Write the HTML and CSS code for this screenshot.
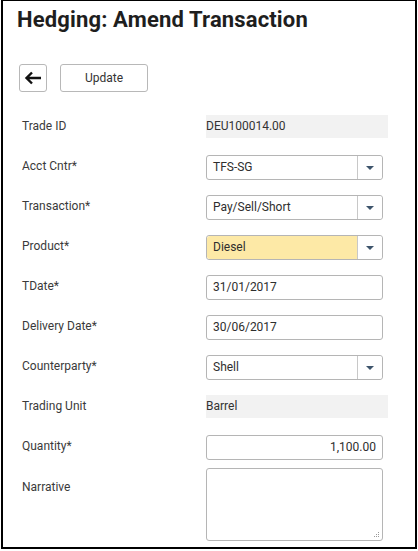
FILE: index.html
```html
<!DOCTYPE html>
<html>
<head>
<meta charset="utf-8">
<link rel="stylesheet" href="styles.css">
</head>
<body>
<div class="frame">
  <h1 class="title">Hedging: Amend Transaction</h1>
  <div class="toolbar">
    <button class="btn btn-back" aria-label="Back">
      <svg width="18" height="14" viewBox="0 0 18 14"><path d="M17 7H2.5M8 1.5L2.5 7L8 12.5" fill="none" stroke="#111" stroke-width="2.4"/></svg>
    </button>
    <button class="btn btn-update">Update</button>
  </div>
  <div class="form">
    <div class="row">
      <div class="label ro-label">Trade ID</div>
      <div class="readonly">DEU100014.00</div>
    </div>
    <div class="row">
      <div class="label">Acct Cntr*</div>
      <div class="select"><span class="value">TFS-SG</span><span class="drop"><i class="caret"></i></span></div>
    </div>
    <div class="row">
      <div class="label">Transaction*</div>
      <div class="select"><span class="value">Pay/Sell/Short</span><span class="drop"><i class="caret"></i></span></div>
    </div>
    <div class="row">
      <div class="label">Product*</div>
      <div class="select select-hl"><span class="value">Diesel</span><span class="drop"><i class="caret"></i></span></div>
    </div>
    <div class="row">
      <div class="label">TDate*</div>
      <div class="input">31/01/2017</div>
    </div>
    <div class="row">
      <div class="label">Delivery Date*</div>
      <div class="input">30/06/2017</div>
    </div>
    <div class="row">
      <div class="label">Counterparty*</div>
      <div class="select"><span class="value">Shell</span><span class="drop"><i class="caret"></i></span></div>
    </div>
    <div class="row">
      <div class="label ro-label">Trading Unit</div>
      <div class="readonly">Barrel</div>
    </div>
    <div class="row row-short">
      <div class="label">Quantity*</div>
      <div class="input input-num">1,100.00</div>
    </div>
    <div class="row">
      <div class="label label-ta">Narrative</div>
      <div class="textarea">
        <svg class="grip" width="7" height="7" viewBox="0 0 7 7"><g fill="#9a9a9a"><rect x="5" y="1" width="1" height="1"/><rect x="3" y="3" width="1" height="1"/><rect x="5" y="3" width="1" height="1"/><rect x="1" y="5" width="1" height="1"/><rect x="3" y="5" width="1" height="1"/><rect x="5" y="5" width="1" height="1"/></g></svg>
      </div>
    </div>
  </div>
</div>
</body>
</html>
```
FILE: styles.css
```css
* { box-sizing: border-box; }
html, body { margin: 0; padding: 0; background: #fff; }
body { font-family: Roboto, "Liberation Sans", Arial, sans-serif; color: #333; }

.frame {
  width: 416px;
  height: 549px;
  margin-left: 1px;
  border: 2px solid #000;
  border-top-width: 1px;
  padding: 6px 0 0 14px;
}

.title {
  margin: 0;
  font-size: 22px;
  line-height: 26px;
  font-weight: 700;
  letter-spacing: 0.15px;
  color: #1e1e1e;
}

.toolbar {
  display: flex;
  gap: 13px;
  margin: 31px 0 0 2px;
}

.btn {
  height: 28px;
  background: #fff;
  border: 1px solid #b8b8b8;
  border-radius: 3px;
  font-family: inherit;
  color: #333;
  padding: 0;
  display: flex;
  align-items: center;
  justify-content: center;
}
.btn-back { width: 28px; }
.btn-update { width: 88px; font-size: 12px; }

.form {
  margin: 23px 0 0 5px;
  display: flex;
  flex-direction: column;
}

.row {
  display: flex;
  align-items: flex-start;
  height: 40px;
}
.row-short { height: 33px; }

.label {
  width: 184px;
  flex: none;
  font-size: 12px;
  line-height: 22px;
  color: #3a3a3a;
}
.ro-label { line-height: 23px; }
.label-ta { padding-top: 8px; }

.readonly {
  width: 182px;
  height: 23px;
  background: #f2f2f2;
  font-size: 12px;
  line-height: 23px;
  color: #333;
}

.select, .input, .textarea {
  width: 177px;
  height: 25px;
  border: 1px solid #b5b5b5;
  border-radius: 3px;
  background: #fff;
  font-size: 12px;
  color: #2e2e2e;
}

.select { display: flex; }
.select .value {
  flex: 1;
  padding-left: 6px;
  line-height: 23px;
}
.select .drop {
  width: 25px;
  flex: none;
  border-left: 1px solid #c8c8c8;
  display: flex;
  align-items: center;
  justify-content: center;
  background: #fff;
  border-radius: 0 3px 3px 0;
}
.caret {
  width: 0;
  height: 0;
  border-left: 4px solid transparent;
  border-right: 4px solid transparent;
  border-top: 4px solid #3d546b;
}
.select-hl .value { background: #fde9a6; border-radius: 3px 0 0 3px; }

.input {
  padding: 0 6px;
  line-height: 23px;
}
.input-num { text-align: right; }

.textarea {
  height: 73px;
  position: relative;
}
.grip {
  position: absolute;
  right: 2px;
  bottom: 2px;
}
```
